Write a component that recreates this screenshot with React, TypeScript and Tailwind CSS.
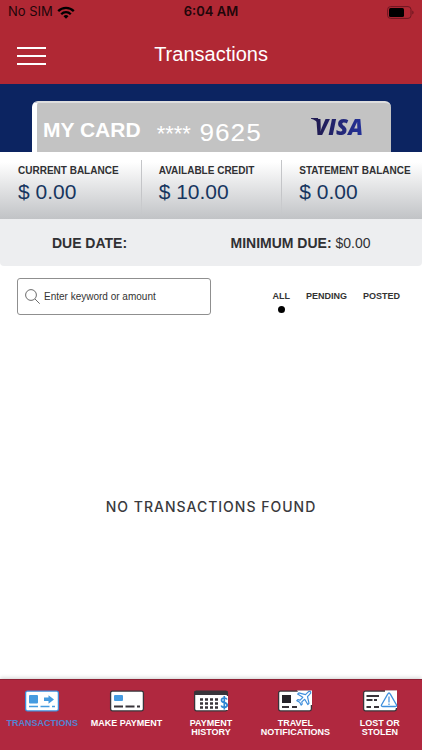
import { useState } from 'react';
import type { ReactNode } from 'react';

type Filter = 'ALL' | 'PENDING' | 'POSTED';

const filters: Filter[] = ['ALL', 'PENDING', 'POSTED'];

const balances = [
  { label: 'CURRENT BALANCE', amount: '$ 0.00' },
  { label: 'AVAILABLE CREDIT', amount: '$ 10.00' },
  { label: 'STATEMENT BALANCE', amount: '$ 0.00' },
];

function StatusBar() {
  return (
    <div className="grid h-6 grid-cols-3 items-center px-2 font-['Inter',sans-serif] text-[13px] text-[#22060a]">
      <div className="flex items-center gap-1">
        <span>No SIM</span>
        <svg viewBox="0 0 18 13" className="h-[13px] w-[18px]" fill="none" stroke="#000" strokeWidth="2.3">
          <path d="M1.2 5.1a11 11 0 0 1 15.6 0" />
          <path d="M4.2 8.2a6.8 6.8 0 0 1 9.6 0" />
          <path d="M9 12.8 6.5 10.2a3.6 3.6 0 0 1 5 0z" fill="#000" stroke="none" />
        </svg>
      </div>
      <span className="text-center font-semibold">6:04 AM</span>
      <svg viewBox="0 0 27 13" className="h-[13px] w-[27px] justify-self-end" fill="none">
        <rect x="0.6" y="0.6" width="23.4" height="11.8" rx="3" stroke="#6d1720" />
        <rect x="2" y="2" width="15" height="9" rx="1.5" fill="#000" />
        <path d="M25.3 4.4v4.2q1.3-.6 1.3-2.1t-1.3-2.1z" fill="#6d1720" />
      </svg>
    </div>
  );
}

function Header() {
  return (
    <header className="bg-[#b02834]">
      <StatusBar />
      <div className="grid h-[60px] grid-cols-[48px_1fr_48px] items-center">
        <button type="button" aria-label="Menu" className="grid gap-[6px] pt-1 pl-[17px]">
          <span className="block h-[2px] w-[29px] bg-white" />
          <span className="block h-[2px] w-[29px] bg-white" />
          <span className="block h-[2px] w-[29px] bg-white" />
        </button>
        <h1 className="text-center text-xl text-white">Transactions</h1>
      </div>
    </header>
  );
}

function VisaLogo() {
  return (
    <div className="relative font-['Open_Sans',sans-serif] text-[22px] leading-6 font-extrabold italic">
      <span className="bg-linear-to-r from-[#1f1a4f] to-[#2434a0] bg-clip-text pr-1 text-transparent">VISA</span>
      <svg viewBox="0 0 8 6" className="absolute top-1 -left-1 h-[6px] w-2" fill="#221c55">
        <path d="M0 0h7l1 6Q5 2 0 .8z" />
      </svg>
    </div>
  );
}

function CardBanner() {
  return (
    <section className="bg-[#0c2461] pt-[17px] pr-[31px] pl-8">
      <div className="flex h-[51px] items-center overflow-hidden rounded-t-md border-t-2 border-l-[5px] border-t-[#dedede] border-l-white bg-[#c3c3c3] pr-6 pl-[6px] text-white">
        <span className="pt-1 text-[21px] font-bold">MY CARD</span>
        <span className="ml-4 pt-3 text-[22px]">****</span>
        <span className="ml-2 pt-3 font-['Liberation_Mono',monospace] text-[26px] leading-8">9625</span>
        <div className="mb-1 ml-auto">
          <VisaLogo />
        </div>
      </div>
    </section>
  );
}

function Balances() {
  return (
    <section className="grid h-[67px] grid-cols-3 bg-linear-to-b from-white from-15% to-[#c1c3c6]">
      {balances.map(({ label, amount }, i) => (
        <div key={label} className="flex">
          {i > 0 ? <span className="mt-2 w-px bg-linear-to-b from-[#c4c5c8] from-60% to-transparent" /> : null}
          <div className={i > 0 ? 'pt-3 pl-[17px]' : 'pt-3 pl-[18px]'}>
            <h2 className="text-[10px] leading-[14px] font-bold whitespace-nowrap text-[#303033]">{label}</h2>
            <p className="text-[21px] leading-7 text-[#17365f]">{amount}</p>
          </div>
        </div>
      ))}
    </section>
  );
}

function IconFrame({ stroke = '#38343a', children }: { stroke?: string; children: ReactNode }) {
  return (
    <svg viewBox="0 0 36 22" className="h-[22px] w-9" fill="none" aria-hidden="true">
      <rect x="1.6" y="1.1" width="32.8" height="19.8" rx="1.8" fill="#fff" stroke={stroke} strokeWidth="1.3" />
      {children}
    </svg>
  );
}

const tabs: { label: string; icon: ReactNode }[] = [
  {
    label: 'TRANSACTIONS',
    icon: (
      <IconFrame stroke="#3f8fdd">
        <rect x="5" y="5" width="9" height="8.5" rx="1" fill="#459be0" />
        <path d="M20 7.5h4.5V5.3l5.5 4.2-5.5 4.2v-2.7H20z" fill="#459be0" />
        <path d="M5 16.5h9M16.5 16.5h9M28 16.5h3" stroke="#459be0" strokeWidth="1.5" />
      </IconFrame>
    ),
  },
  {
    label: 'MAKE PAYMENT',
    icon: (
      <IconFrame>
        <rect x="5" y="5" width="9" height="6" rx="1" fill="#459be0" />
        <path d="M5 16.5h9M16.5 16.5h9M28 16.5h3" stroke="#38343a" strokeWidth="1.8" />
      </IconFrame>
    ),
  },
  {
    label: 'PAYMENT HISTORY',
    icon: (
      <IconFrame>
        <path d="M1.5 1h33v4h-33z" fill="#38343a" />
        <path
          d="M7 9.5h3M12 9.5h3M17 9.5h3M22 9.5h3M7 13.5h3M12 13.5h3M17 13.5h3M22 13.5h3M7 17.5h3M12 17.5h3M17 17.5h3M22 17.5h3"
          stroke="#38343a"
          strokeWidth="2.7"
        />
        <path d="M28 6h7v14h-7z" fill="#fff" />
        <path
          d="M34 9.5C33.5 8.3 32.5 8 31.2 8c-1.600 0-2.700.8-2.700 2.200 0 3.400 5.700 1.500 5.700 4.900 0 1.500-1.300 2.300-2.900 2.300-1.500 0-2.700-.6-3.100-1.900M31.300 6v13.500"
          stroke="#2f86d3"
          strokeWidth="1.7"
        />
      </IconFrame>
    ),
  },
  {
    label: 'TRAVEL NOTIFICATIONS',
    icon: (
      <IconFrame>
        <rect x="5" y="5" width="9" height="8" fill="#262329" />
        <path d="M5 17h7M15 17h5" stroke="#38343a" strokeWidth="1.8" />
        <path d="M20 .4h15v14.6H31z" fill="#fff" />
        <path
          d="M33.7 1.8c-1-.7-2.400 0-3.200.8l-2 2-6.700-1.700-1.200 1.200 5.200 3.200-2.700 2.900-2.300-.5-1 1 2.900 1.600 1.500 2.900 1-1-.4-2.300 2.900-2.600 3.100 5.200 1.200-1.200-1.500-6.700 1.900-2c.9-.8 1.800-2 1.300-2.800z"
          stroke="#3f8fdd"
          strokeWidth="1.2"
          strokeLinejoin="round"
        />
      </IconFrame>
    ),
  },
  {
    label: 'LOST OR STOLEN',
    icon: (
      <IconFrame>
        <path d="M4.5 6H17M4.500 10h6M12 10h3M4.500 17h4.500M12 17h5" stroke="#38343a" strokeWidth="1.9" />
        <path d="M23 .4h12v17.600H23z" fill="#fff" />
        <path
          d="M25.7 4.200q1.300-2.400 2.600 0l6.100 10.500q.9 1.800-1 1.800H20.600q-1.900 0-1-1.800z"
          fill="#fff"
          stroke="#3f8fdd"
          strokeWidth="1.3"
        />
        <path d="M27 6.5v6M27 13.500v1.500" stroke="#3f8fdd" strokeWidth="1.2" />
      </IconFrame>
    ),
  },
];

function TabBar() {
  return (
    <nav
      aria-label="Card menu"
      className="grid h-[71px] grid-cols-5 items-start border-t border-[#8e2034] bg-[#b0283f] pt-[10px] shadow-[0_-1px_4px_#00000030]"
    >
      {tabs.map(({ label, icon }, i) => (
        <a
          key={label}
          href="#"
          aria-current={i === 0 ? 'page' : undefined}
          className={
            i === 0
              ? 'flex flex-col items-center text-center text-[9px] leading-[9px] font-bold text-[#5583d0]'
              : 'flex flex-col items-center px-1 text-center text-[9px] leading-[9px] font-bold text-white'
          }
        >
          {icon}
          <span className="mt-[7px]">{label}</span>
        </a>
      ))}
    </nav>
  );
}

export default function App() {
  const [filter, setFilter] = useState<Filter>('ALL');

  return (
    <div className="flex min-h-screen flex-col bg-white font-['Liberation_Sans',Arial,sans-serif]">
      <Header />
      <CardBanner />
      <Balances />

      <section className="grid h-[47px] grid-cols-[179px_1fr] items-center rounded-b bg-[#edeef0] text-sm text-[#303033]">
        <p className="text-center font-bold">DUE DATE:</p>
        <p className="text-center">
          <span className="font-bold">MINIMUM DUE:</span> $0.00
        </p>
      </section>

      <section className="flex items-start justify-between pt-3 pr-[22px] pl-[17px]">
        <label className="flex h-[37px] w-[194px] items-center gap-1 rounded-[3px] border border-[#8f8f8f] pl-[7px]">
          <svg viewBox="0 0 15 15" className="h-[15px] w-[15px] shrink-0" fill="none" stroke="#6b6b6b">
            <circle cx="6" cy="6" r="5.4" />
            <path d="m10 10 4.7 4.7" />
          </svg>
          <input
            type="text"
            aria-label="Search transactions"
            placeholder="Enter keyword or amount"
            className="w-full min-w-0 text-[10px] text-[#333] outline-none placeholder:text-[#333]"
          />
        </label>
        <div className="flex gap-4 pt-3">
          {filters.map((name) => (
            <button
              key={name}
              type="button"
              onClick={() => setFilter(name)}
              className="flex flex-col items-center gap-1 text-[9px] leading-3 font-bold text-[#333]"
            >
              {name}
              {filter === name ? <span className="h-[7px] w-[7px] rounded-full bg-black" /> : null}
            </button>
          ))}
        </div>
      </section>

      <main className="flex flex-1 items-center justify-center pt-5">
        <p className="font-['Inter',sans-serif] text-sm font-medium tracking-[1px] text-[#3a3a3d]">NO TRANSACTIONS FOUND</p>
      </main>

      <TabBar />
    </div>
  );
}
